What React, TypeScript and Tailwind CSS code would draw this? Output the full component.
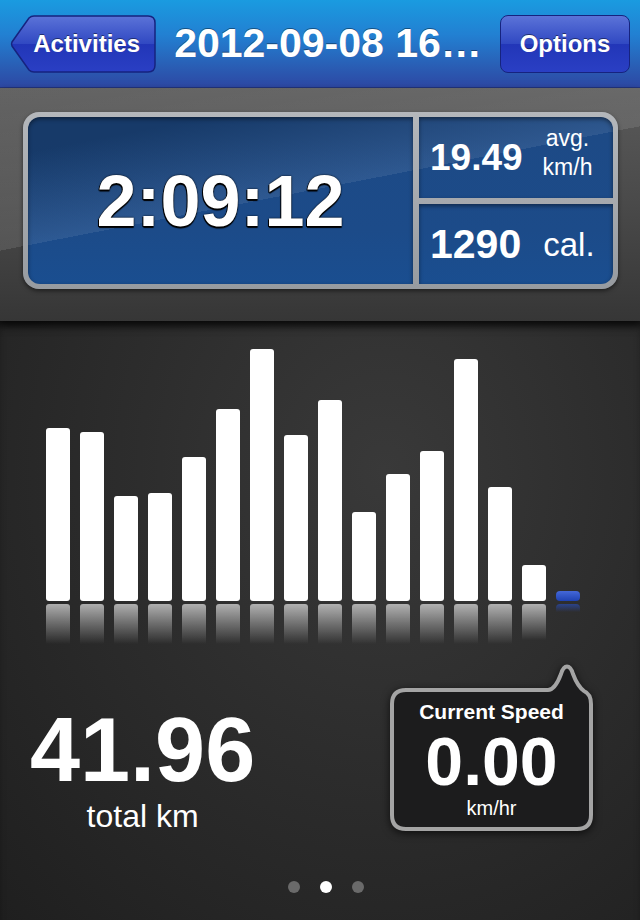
import React from 'react';

// Ride summary screen: header, stats panel, lap bar chart, totals and current speed bubble.

const LAPS = [173, 169, 105, 108, 144, 192, 252, 166, 201, 89, 127, 150, 242, 114, 36];

const SHEEN_GRAY =
  'bg-fixed bg-[linear-gradient(169deg,rgba(255,255,255,0.06)_10%,rgba(255,255,255,0.1)_24%,rgba(255,255,255,0)_24%),linear-gradient(180deg,#5a5a5a_9.5%,#4a4a4a_22%,#363636_35%)]';

const SHEEN_BLUE =
  'bg-fixed bg-[linear-gradient(169deg,rgba(0,0,0,0.22)_15%,rgba(255,255,255,0.08)_24%,rgba(255,255,255,0)_24%),linear-gradient(180deg,#1d4a86_15%,#1c4b89_25%,#1a4e90_31%)]';

function BackButton() {
  return (
    <button type="button" className="relative flex h-[58px] w-[146px] items-center justify-end pr-[16px]">
      <svg className="absolute inset-0" width="146" height="58" viewBox="0 0 146 58">
        <defs>
          <linearGradient id="btn" x1="0" y1="0" x2="0" y2="1">
            <stop offset="0" stopColor="#5b73d8" />
            <stop offset="0.5" stopColor="#3048c2" />
            <stop offset="0.5" stopColor="#2236b8" />
            <stop offset="1" stopColor="#2a3fc4" />
          </linearGradient>
        </defs>
        <path
          d="M24 1 H138 Q145 1 145 8 V50 Q145 57 138 57 H24 Q21 57 19 55 L2 31 Q1 29 2 27 L19 3 Q21 1 24 1 Z"
          fill="url(#btn)"
          stroke="#16237f"
          strokeWidth="1.5"
        />
      </svg>
      <span className="relative text-[24px] font-bold text-white [text-shadow:0_-1px_0_rgba(0,0,0,0.45)]">
        Activities
      </span>
    </button>
  );
}

function SpeedBubble() {
  return (
    <div className="relative flex h-[170px] w-[207px] flex-col items-center pt-[38px] text-white">
      <svg
        className="absolute inset-0 drop-shadow-[0_2px_4px_rgba(0,0,0,0.7)]"
        width="207"
        height="170"
        viewBox="0 0 207 170"
      >
        <path
          d="M18 28 H160 C166 28 170 20 173 12 C176 2 182 2 185 12 C188 20 192 26 196 29 Q203 32 203 42 V153 Q203 167 189 167 H18 Q4 167 4 153 V42 Q4 28 18 28 Z"
          fill="#1c1c1d"
          stroke="#a4a4a4"
          strokeWidth="4"
        />
      </svg>
      <div className="relative text-[21px] font-bold leading-[24px]">Current Speed</div>
      <div className="relative mt-[3px] text-[68px] font-bold leading-none">0.00</div>
      <div className="relative mt-[3px] text-[20px] leading-[20px]">km/hr</div>
    </div>
  );
}

export default function App() {
  return (
    <div className="flex h-[920px] w-[640px] flex-col overflow-hidden bg-[#262626] font-['Liberation_Sans',Arial,sans-serif] text-white">
      {/* nav bar */}
      <header className="flex h-[88px] items-center justify-between border-b border-[#23357f] bg-[linear-gradient(180deg,#1a9be0_0%,#2280d2_40%,#2a5cb3_78%,#2d48a4_100%)] pl-[10px] pr-[10px]">
        <BackButton />
        <h1 className="text-[41px] font-bold text-white [text-shadow:0_-1px_0_rgba(0,0,0,0.4)]">
          2012-09-08 16…
        </h1>
        <button
          type="button"
          className="flex h-[58px] w-[130px] items-center justify-center rounded-[8px] border-[1.5px] border-[#16237f] bg-[linear-gradient(180deg,#5b73d8_0%,#3048c2_50%,#2236b8_50%,#2a3fc4_100%)] text-[24px] font-bold [text-shadow:0_-1px_0_rgba(0,0,0,0.45)]"
        >
          Options
        </button>
      </header>

      {/* stats panel */}
      <section className={`relative z-10 h-[233px] pl-[23px] pr-[22px] pt-[24px] shadow-[0_4px_8px_rgba(0,0,0,0.6)] ${SHEEN_GRAY}`}>
        <div className="grid h-[177px] grid-cols-[385px_194px] grid-rows-[81px_80px] gap-[6px] rounded-[16px] bg-[linear-gradient(180deg,#b4b7bb,#979ba0)] p-[5px] shadow-[0_2px_4px_rgba(0,0,0,0.5)]">
          <div
            className={`row-span-2 flex items-center justify-center rounded-l-[12px] shadow-[inset_0_2px_4px_rgba(0,0,0,0.45)] ${SHEEN_BLUE}`}
          >
            <span className="text-[72px] font-bold leading-none [text-shadow:0_2px_1px_#000,0_0_2px_#000,-1px_1px_0_#000]">
              2:09:12
            </span>
          </div>
          <div className={`flex items-center rounded-tr-[12px] pl-[11px] shadow-[inset_0_2px_4px_rgba(0,0,0,0.45)] ${SHEEN_BLUE}`}>
            <span className="text-[37px] font-bold leading-none">19.49</span>
            <div className="mb-[10px] ml-[20px] flex flex-col items-center text-[23px] leading-[29px]">
              <span>avg.</span>
              <span>km/h</span>
            </div>
          </div>
          <div className={`flex items-center rounded-br-[12px] pl-[11px] shadow-[inset_0_2px_4px_rgba(0,0,0,0.45)] ${SHEEN_BLUE}`}>
            <span className="text-[41px] font-bold leading-none">1290</span>
            <span className="ml-[22px] text-[33px] leading-none">cal.</span>
          </div>
        </div>
      </section>

      {/* laps chart + totals */}
      <main className="flex flex-1 flex-col bg-[radial-gradient(ellipse_at_60%_25%,#393939_0%,#2d2d2d_45%,#1f1f1f_100%)] pt-[28px] shadow-[inset_0_8px_10px_-4px_rgba(0,0,0,0.6)]">
        <div className="flex h-[252px] items-end gap-[10px] pl-[46px]">
          {LAPS.map((h, i) => (
            <div key={i} className="w-[24px] rounded-[3px] bg-white" style={{ height: h }} />
          ))}
          <div className="h-[10px] w-[24px] rounded-[4px] bg-[linear-gradient(180deg,#4468d8,#1f42b2)]" />
        </div>
        <div className="mt-[3px] flex h-[40px] items-start gap-[10px] pl-[46px]">
          {LAPS.map((h, i) => (
            <div
              key={i}
              className="w-[24px] rounded-t-[3px] bg-[linear-gradient(180deg,rgba(255,255,255,0.62)_0%,rgba(255,255,255,0.3)_50%,rgba(255,255,255,0)_100%)]"
              style={{ height: Math.min(h, 40) }}
            />
          ))}
          <div className="h-[8px] w-[24px] rounded-t-[4px] bg-[linear-gradient(180deg,rgba(40,80,200,0.6),rgba(40,80,200,0))]" />
        </div>

        <div className="mt-[18px] flex items-start justify-between pl-[30px] pr-[45px]">
          <div className="mt-[43px] flex flex-col items-center">
            <span className="text-[90px] font-bold leading-none">41.96</span>
            <span className="mt-[5px] text-[32px] leading-none">total km</span>
          </div>
          <SpeedBubble />
        </div>

        <div className="ml-[12px] mt-[49px] flex justify-center gap-[20px]">
          <span className="h-[12px] w-[12px] rounded-full bg-[#6a6a6a]" />
          <span className="h-[12px] w-[12px] rounded-full bg-white" />
          <span className="h-[12px] w-[12px] rounded-full bg-[#6a6a6a]" />
        </div>
      </main>
    </div>
  );
}
